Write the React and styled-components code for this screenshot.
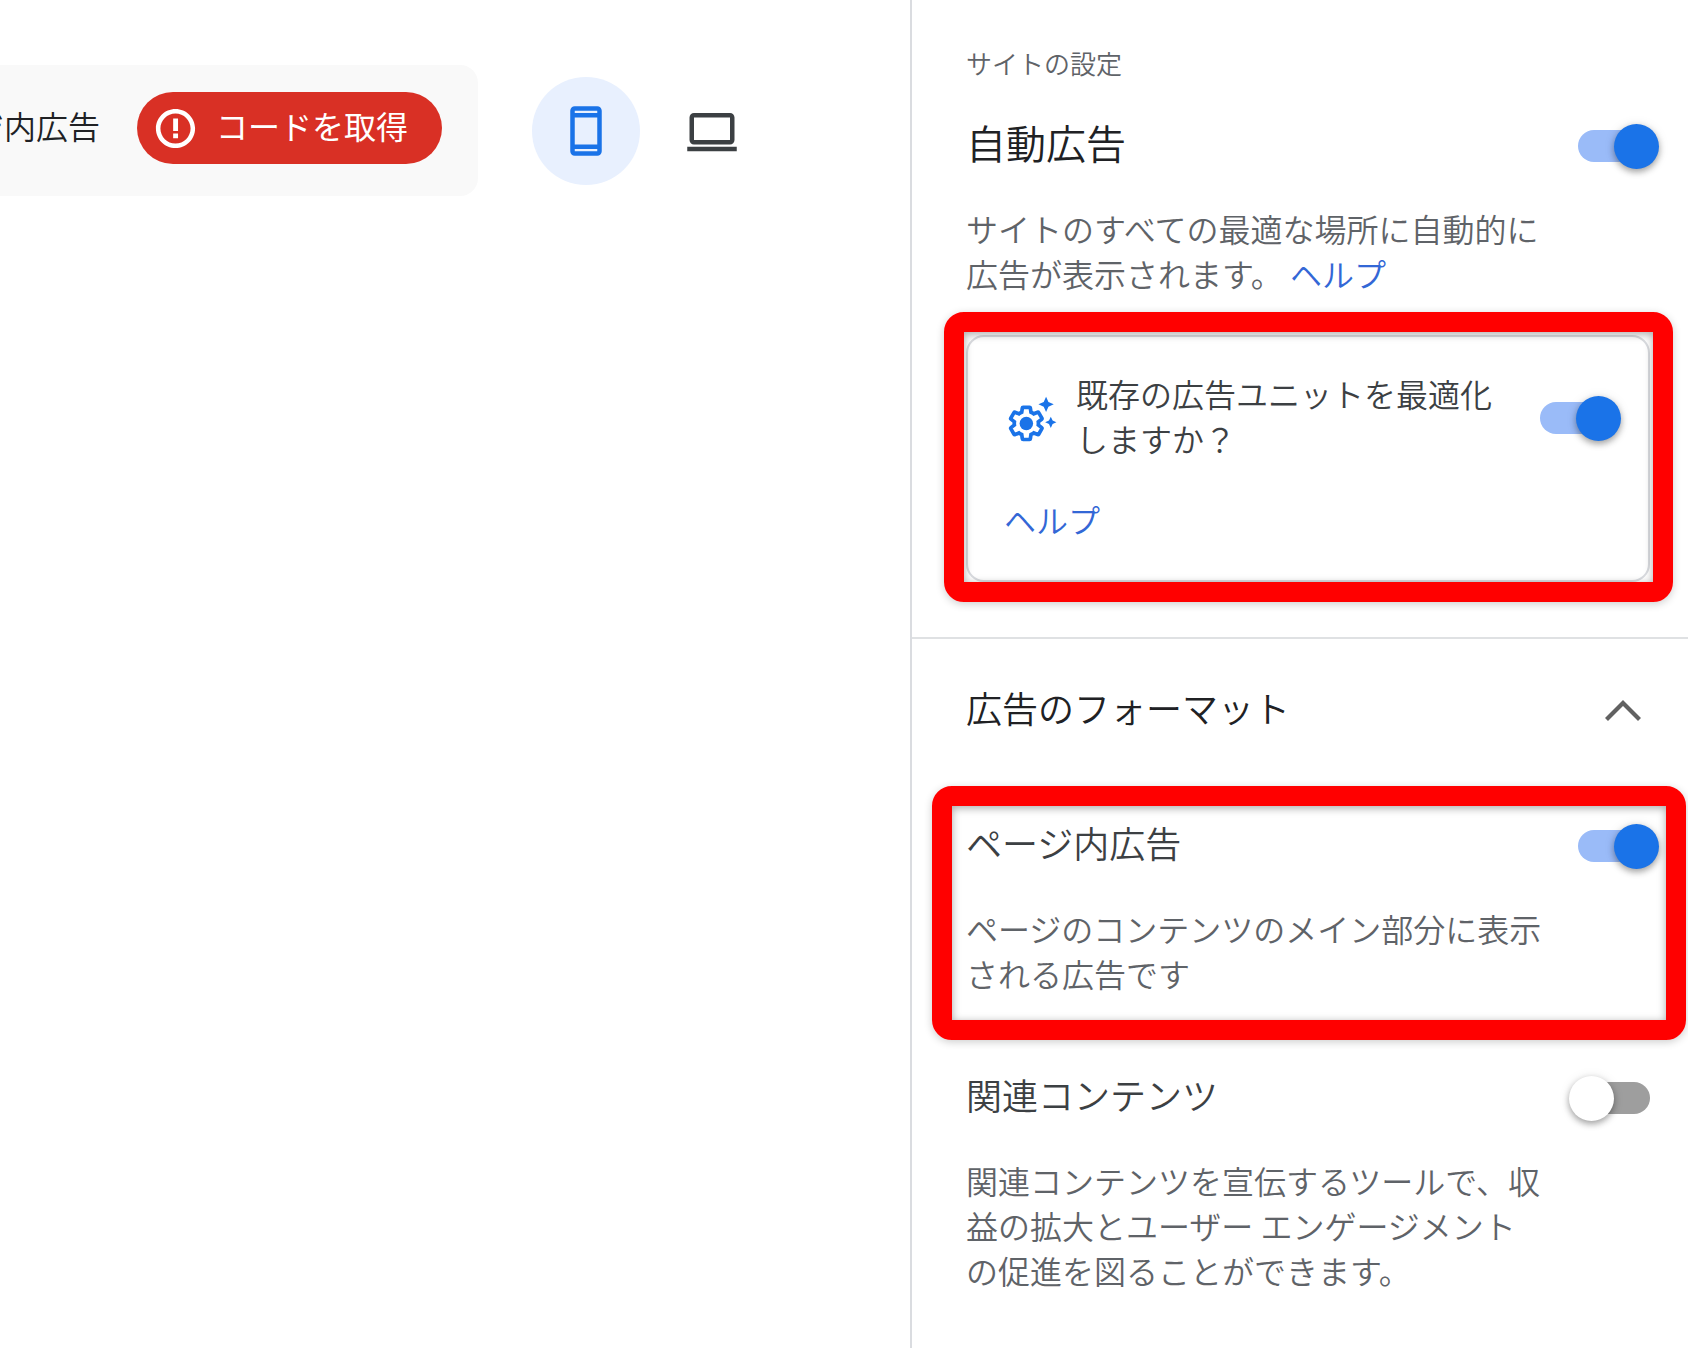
// Imports
import React, { useState } from "react";
import styled, { createGlobalStyle, css } from "styled-components";

// Page Style
const GlobalStyle = createGlobalStyle`
  * {
    box-sizing: border-box;
  }

  body {
    margin: 0;
    background-color: #fff;
    color: #202124;
    font-family: "Noto Sans CJK JP", "Noto Sans", sans-serif;
    font-size: 32px;
    font-weight: 350;
    line-height: 45px;
  }

  button {
    border: 0;
    padding: 0;
    background: none;
    color: inherit;
    font: inherit;
    cursor: pointer;
  }
`;

const roundButton = css`
  display: flex;
  flex-shrink: 0;
  align-items: center;
  justify-content: center;
`;

const StyledPage = styled.div`
  display: flex;
  min-height: 100vh;
`;

const StyledPreview = styled.main`
  flex: 1;
  min-width: 0;
  padding: 65px 144px 0 0;
`;

const StyledToolbar = styled.div`
  display: flex;
  align-items: center;
`;

const StyledStatusBar = styled.div`
  display: flex;
  flex: 1;
  justify-content: flex-end;
  align-items: center;
  gap: 37px;
  min-width: 0;
  margin-right: 54px;
  padding: 27px 36px 32px 0;
  border-radius: 0 18px 18px 0;
  background-color: #f9f9f9;
  overflow: hidden;
`;

const StyledBarText = styled.span`
  flex-shrink: 0;
  padding-bottom: 6px;
  white-space: nowrap;
`;

const StyledCodeButton = styled.button`
  ${roundButton};
  && {
    gap: 17px;
    height: 72px;
    padding: 0 34px 0 15px;
    border-radius: 36px;
    background-color: #d93025;
    color: #fff;
    font-weight: 400;
  }
`;

const StyledDevices = styled.div`
  display: flex;
  gap: 18px;
`;

const StyledDeviceButton = styled.button`
  ${roundButton};
  && {
    width: 108px;
    height: 108px;
    border-radius: 50%;
    background-color: ${(props) => (props.$active ? "#e8f0fe" : "transparent")};
    color: ${(props) => (props.$active ? "#1a73e8" : "#3c4043")};
  }
`;

const StyledSettings = styled.aside`
  flex: 0 1 778px;
  border-left: 2px solid #dadce0;
`;

const StyledSection = styled.section`
  padding: ${(props) => (props.$first ? "45px 38px 55px 54px" : "45px 38px 45px 54px")};
  border-top: ${(props) => (props.$first ? "0" : "2px solid #dfe1e3")};
`;

const StyledCaption = styled.p`
  margin: 0 0 38px;
  color: #5f6368;
  font-size: 26px;
  line-height: 36px;
`;

const StyledRow = styled.div`
  display: flex;
  align-items: center;
  justify-content: space-between;
  min-height: 54px;
`;

const StyledTitle = styled.h2`
  margin: 0;
  padding-bottom: 8px;
  font-size: ${(props) => (props.$large ? "40px" : "36px")};
  font-weight: inherit;
  line-height: 46px;
`;

const StyledFormatName = styled(StyledTitle).attrs({ as: "h3" })`
  color: #3c4043;
`;

const StyledDescription = styled.p`
  margin: 33px 0 0;
  padding: 0 108px 1px 0;
  color: #5f6368;
`;

const StyledLink = styled.a`
  color: #3367d6;
  text-decoration: none;
`;

// A frame drawn over the block, with room for the part it surrounds
const StyledMarked = styled.div`
  position: relative;
  margin-top: ${(props) => props.$space};

  &::after {
    content: "";
    position: absolute;
    inset: ${(props) => props.$reach};
    border: 20px solid #f00;
    border-radius: 20px;
    box-shadow: 0 2px 8px rgba(0, 0, 0, 0.2), inset 0 2px 8px rgba(0, 0, 0, 0.35);
    pointer-events: none;
  }
`;

const StyledCard = styled.div`
  padding: 34px 36px 38px;
  border: 2px solid #dadce0;
  border-radius: 18px;
`;

const StyledCardRow = styled.div`
  display: flex;
  align-items: center;
  gap: 18px;
  margin-bottom: 32px;
`;

const StyledCardLabel = styled.label`
  flex: 1;
  padding: 0 18px 4px 0;
  color: #3c4043;
`;

const StyledFormat = styled.div`
  margin-top: ${(props) => props.$space || "0"};
`;

const StyledExpandButton = styled.button`
  ${roundButton};
  && {
    width: 54px;
    height: 54px;
    color: #616161;
  }
`;

const StyledSwitch = styled.input`
  appearance: none;
  position: relative;
  flex-shrink: 0;
  width: 72px;
  height: 32px;
  margin: 0;
  border-radius: 16px;
  background-color: #9e9e9e;
  cursor: pointer;

  &::before {
    content: "";
    position: absolute;
    top: -6px;
    left: -9px;
    width: 45px;
    height: 45px;
    border-radius: 50%;
    background-color: #fff;
    box-shadow: 0 3px 6px rgba(0, 0, 0, 0.32), 0 1px 12px rgba(0, 0, 0, 0.1);
  }

  &:checked {
    background-color: #9abbf8;
  }

  &:checked::before {
    left: 36px;
    background-color: #1a73e8;
  }
`;

// Icons
const ErrorIcon = () => (
  <svg width="47" height="47" viewBox="0 0 24 24" fill="currentColor" aria-hidden="true">
    <path d="M10.8 14.6h2.5V17h-2.5zm0-7.7h2.5v6.4h-2.5zM11.99 2C6.47 2 2 6.48 2 12s4.47 10 9.99 10C17.52 22 22 17.52 22 12S17.52 2 11.99 2zM12 19.7c-4.25 0-7.7-3.45-7.7-7.7S7.75 4.3 12 4.3s7.7 3.45 7.7 7.7-3.45 7.7-7.7 7.7z" />
  </svg>
);

const PhoneIcon = () => (
  <svg width="54" height="54" viewBox="0 0 24 24" fill="currentColor" aria-hidden="true">
    <path d="M17 1.01L7 1c-1.1 0-2 .9-2 2v18c0 1.1.9 2 2 2h10c1.1 0 2-.9 2-2V3c0-1.1-.9-1.99-2-1.99zM17 21H7v-1h10v1zm0-3H7V6h10v12zm0-14H7V3h10v1z" />
  </svg>
);

const LaptopIcon = () => (
  <svg width="54" height="54" viewBox="0 0 24 24" fill="currentColor" aria-hidden="true">
    <path d="M20 18c1.1 0 2-.9 2-2V6c0-1.1-.9-2-2-2H4c-1.1 0-2 .9-2 2v10c0 1.1.9 2 2 2h16zM4 6h16v10H4V6zM1 19h22v2H1z" />
  </svg>
);

const OptimizeIcon = () => (
  <svg width="54" height="54" viewBox="0 0 24 24" fill="#1a73e8" aria-hidden="true">
    <g transform="translate(9.93 14.4) scale(0.715) translate(-12 -12)">
      <path
        d="M19.43 12.98c.04-.32.07-.64.07-.98 0-.34-.03-.66-.07-.98l2.11-1.65c.19-.15.24-.42.12-.64l-2-3.46c-.09-.16-.26-.25-.44-.25-.06 0-.12.01-.17.03l-2.49 1c-.52-.4-1.08-.73-1.69-.98l-.38-2.65C14.46 2.18 14.25 2 14 2h-4c-.25 0-.46.18-.49.42l-.38 2.65c-.61.25-1.17.59-1.69.98l-2.49-1c-.06-.02-.12-.03-.18-.03-.17 0-.34.09-.43.25l-2 3.46c-.13.22-.07.49.12.64l2.11 1.65c-.04.32-.07.65-.07.98 0 .33.03.66.07.98l-2.11 1.65c-.19.15-.24.42-.12.64l2 3.46c.09.16.26.25.44.25.06 0 .12-.01.17-.03l2.49-1c.52.4 1.08.73 1.69.98l.38 2.65c.03.24.24.42.49.42h4c.25 0 .46-.18.49-.42l.38-2.65c.61-.25 1.17-.59 1.69-.98l2.49 1c.06.02.12.03.18.03.17 0 .34-.09.43-.25l2-3.46c.12-.22.07-.49-.12-.64l-2.11-1.65z"
        fill="none"
        stroke="#1a73e8"
        strokeWidth="2.3"
      />
    </g>
    <circle cx="9.93" cy="14.4" r="3" />
    <path d="M18.7 2.5l1.05 2.35 2.35 1.05-2.35 1.05L18.7 9.3l-1.05-2.35L15.3 5.9l2.35-1.05z" />
    <path d="M20.8 11.4l.8 1.7 1.7.8-1.7.8-.8 1.7-.8-1.7-1.7-.8 1.7-.8z" />
  </svg>
);

const ChevronIcon = () => (
  <svg width="36" height="22" viewBox="0 0 36 22" fill="none" stroke="currentColor" aria-hidden="true">
    <path d="M1.5 19.5L18 3l16.500 16.500" strokeWidth="4.200" />
  </svg>
);

function App() {
  const [device, setDevice] = useState("mobile");
  const [expanded, setExpanded] = useState(true);
  const [settings, setSettings] = useState({
    autoAds: true,
    optimize: true,
    inPage: true,
    related: false,
  });

  const handleChange = (event) => {
    const { name, checked } = event.target;
    setSettings({ ...settings, [name]: checked });
  };

  const renderSwitch = (name) => (
    <StyledSwitch
      type="checkbox"
      role="switch"
      id={name}
      name={name}
      checked={settings[name]}
      onChange={handleChange}
    />
  );

  return (
    <>
      <GlobalStyle />
      <StyledPage lang="ja">
        <StyledPreview>
          <StyledToolbar>
            <StyledStatusBar>
              <StyledBarText>ページ内広告</StyledBarText>
              <StyledCodeButton type="button">
                <ErrorIcon />
                <StyledBarText>コードを取得</StyledBarText>
              </StyledCodeButton>
            </StyledStatusBar>
            <StyledDevices>
              <StyledDeviceButton
                type="button"
                aria-label="モバイル"
                $active={device === "mobile"}
                onClick={() => setDevice("mobile")}
              >
                <PhoneIcon />
              </StyledDeviceButton>
              <StyledDeviceButton
                type="button"
                aria-label="パソコン"
                $active={device === "desktop"}
                onClick={() => setDevice("desktop")}
              >
                <LaptopIcon />
              </StyledDeviceButton>
            </StyledDevices>
          </StyledToolbar>
        </StyledPreview>

        <StyledSettings>
          <StyledSection $first>
            <StyledCaption>サイトの設定</StyledCaption>
            <StyledRow>
              <StyledTitle $large>
                <label htmlFor="autoAds">自動広告</label>
              </StyledTitle>
              {renderSwitch("autoAds")}
            </StyledRow>
            <StyledDescription>
              サイトのすべての最適な場所に自動的に広告が表示されます。{" "}
              <StyledLink href="#help">ヘルプ</StyledLink>
            </StyledDescription>

            <StyledMarked $space="38px" $reach="-23px -23px -20px -22px">
              <StyledCard>
                <StyledCardRow>
                  <OptimizeIcon />
                  <StyledCardLabel htmlFor="optimize">
                    既存の広告ユニットを最適化しますか？
                  </StyledCardLabel>
                  {renderSwitch("optimize")}
                </StyledCardRow>
                <StyledLink href="#optimize-help">ヘルプ</StyledLink>
              </StyledCard>
            </StyledMarked>
          </StyledSection>

          <StyledSection>
            <StyledRow>
              <StyledTitle>広告のフォーマット</StyledTitle>
              <StyledExpandButton
                type="button"
                aria-label="広告のフォーマット"
                aria-expanded={expanded}
                onClick={() => setExpanded(!expanded)}
              >
                <ChevronIcon />
              </StyledExpandButton>
            </StyledRow>
            {expanded && (
              <>
                <StyledMarked $space="81px" $reach="-33px -36px -43px -34px">
                  <StyledFormat>
                    <StyledRow>
                      <StyledFormatName>
                        <label htmlFor="inPage">ページ内広告</label>
                      </StyledFormatName>
                      {renderSwitch("inPage")}
                    </StyledRow>
                    <StyledDescription>
                      ページのコンテンツのメイン部分に表示される広告です
                    </StyledDescription>
                  </StyledFormat>
                </StyledMarked>
                <StyledFormat $space="74px">
                  <StyledRow>
                    <StyledFormatName>
                      <label htmlFor="related">関連コンテンツ</label>
                    </StyledFormatName>
                    {renderSwitch("related")}
                  </StyledRow>
                  <StyledDescription>
                    関連コンテンツを宣伝するツールで、収益の拡大とユーザー エンゲージメントの促進を図ることができます。
                  </StyledDescription>
                </StyledFormat>
              </>
            )}
          </StyledSection>
        </StyledSettings>
      </StyledPage>
    </>
  );
}

export default App;
